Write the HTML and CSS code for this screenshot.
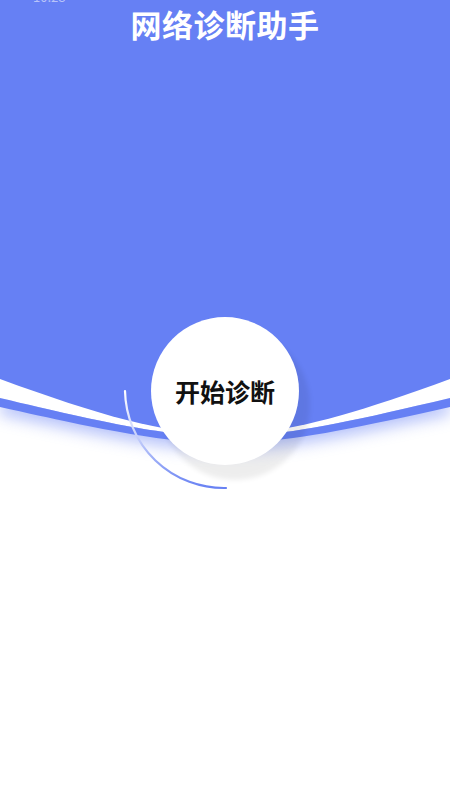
FILE: index.html
```html
<!DOCTYPE html>
<html lang="zh-CN">
<head>
<meta charset="utf-8">
<title>网络诊断助手</title>
<link rel="stylesheet" href="styles.css">
</head>
<body>
<div class="screen">
  <svg class="backdrop" width="450" height="520" viewBox="0 0 450 520" aria-hidden="true">
    <defs>
      <filter id="soft" x="-20%" y="-50%" width="140%" height="200%">
        <feGaussianBlur stdDeviation="8"/>
      </filter>
      <linearGradient id="arcGrad" gradientUnits="userSpaceOnUse" x1="0" y1="390" x2="0" y2="489">
        <stop offset="0" stop-color="#ffffff"/>
        <stop offset="0.45" stop-color="#c9d2fa"/>
        <stop offset="1" stop-color="#6680f3"/>
      </linearGradient>
    </defs>
    <!-- soft shadow under the lower band -->
    <path class="band-shadow" filter="url(#soft)" d="M0,400 H450 V414 C220,462 230,462 0,414 Z"/>
    <!-- keep the gap between the two blue shapes clean -->
    <path class="gap" d="M0,0 H450 V398 C235,449 215,449 0,398 Z"/>
    <!-- lower band -->
    <path class="band" d="M0,398 C215,449 235,449 450,398 V407 C235,455 215,455 0,407 Z"/>
    <!-- main blue area -->
    <path class="sky" d="M0,0 H450 V379 C250,452 200,452 0,379 Z"/>
    <!-- decorative arc -->
    <path class="ring" d="M125,391 A99,99 0 0 0 226,488"/>
  </svg>

  <div class="content">
    <div class="status"><span class="status-text">10:28</span></div>
    <h1 class="title">网络诊断助手</h1>
    <button class="start" type="button">开始诊断</button>
  </div>
</div>
</body>
</html>
```
FILE: styles.css
```css
html, body {
  margin: 0;
  padding: 0;
  background: #ffffff;
}

.screen {
  width: 450px;
  height: 800px;
  overflow: hidden;
  background: #ffffff;
  display: grid;
  grid-template-columns: 450px;
  grid-template-rows: 800px;
}

.backdrop {
  grid-area: 1 / 1;
  display: block;
  align-self: start;
}

.sky {
  fill: #6680f4;
}

.band {
  fill: #6680f4;
}

.gap {
  fill: #ffffff;
}

.band-shadow {
  fill: #6680f4;
  opacity: 0.5;
}

.ring {
  fill: none;
  stroke: url(#arcGrad);
  stroke-width: 2.2;
  stroke-linecap: round;
}

.content {
  grid-area: 1 / 1;
  display: flex;
  flex-direction: column;
  align-items: center;
  font-family: "Noto Sans CJK SC", "Noto Sans", sans-serif;
}

.status {
  align-self: stretch;
  height: 4px;
  overflow: hidden;
  padding-left: 33px;
}

.status-text {
  display: block;
  margin-top: -10px;
  font-size: 13px;
  line-height: 13px;
  color: rgba(255, 255, 255, 0.55);
}

.title {
  margin: 0;
  padding-top: 2px;
  font-size: 31px;
  line-height: 36px;
  font-weight: 700;
  color: #ffffff;
  letter-spacing: 0.5px;
}

.start {
  margin-top: 275px;
  width: 148px;
  height: 148px;
  border: none;
  border-radius: 50%;
  background: #ffffff;
  box-shadow: 10px 14px 5px 1px rgba(0, 0, 0, 0.07);
  font-family: "Noto Sans CJK SC", "Noto Sans", sans-serif;
  font-size: 25px;
  font-weight: 700;
  color: #111111;
  padding: 0;
  line-height: 1;
  cursor: pointer;
}
```
